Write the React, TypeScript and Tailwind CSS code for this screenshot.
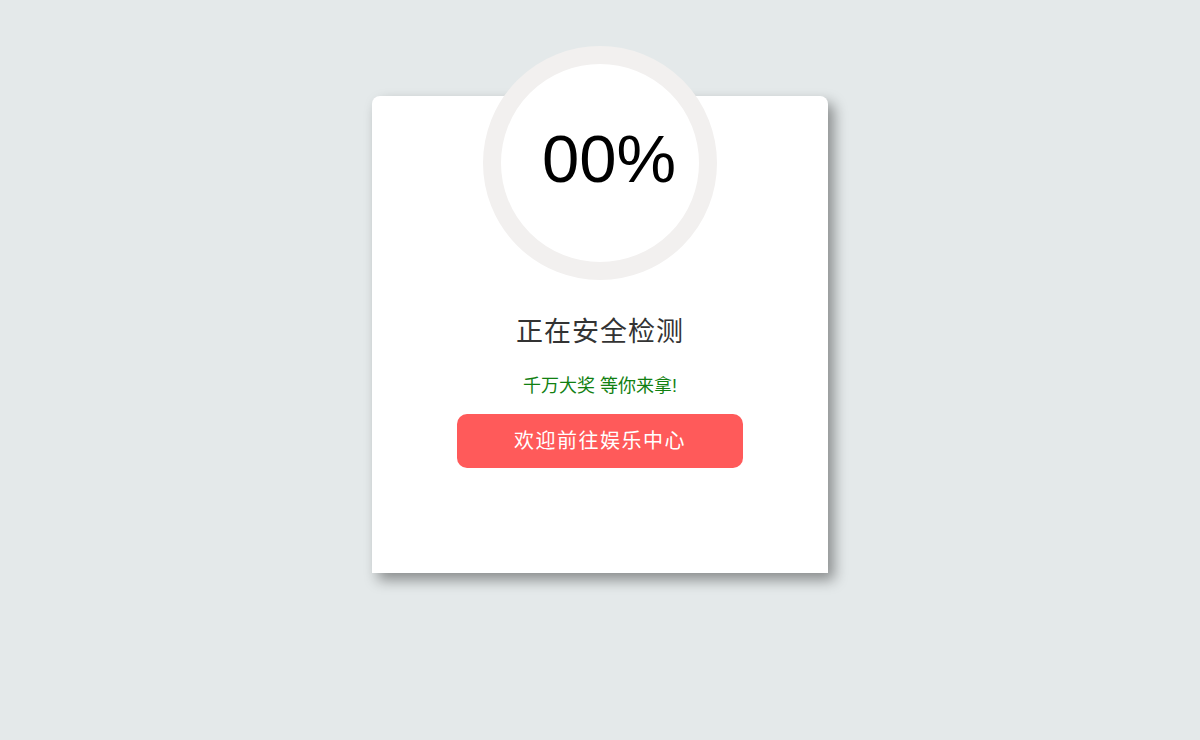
export default function App() {
  return (
    <div
      className="min-h-[740px] w-full bg-[#e4e9ea] flex justify-center"
      style={{ fontFamily: '"Liberation Sans", "Noto Sans CJK SC", sans-serif' }}
    >
      <div className="mt-[96px] w-[456px] h-[477px] bg-white rounded-t-[8px] shadow-[6px_7px_14px_rgba(0,0,0,0.4)] flex flex-col items-center">
        {/* progress ring */}
        <div className="-mt-[50px] w-[234px] h-[234px] rounded-full border-[18px] border-[#f2f0ef] bg-white flex items-center justify-center">
          <span className="text-[67px] leading-none text-black pl-[18px] -mt-[10px]">00%</span>
        </div>

        <h1 className="mt-[35px] text-[27px] leading-[34px] text-[#333] tracking-[1px]">正在安全检测</h1>
        <p className="mt-[25px] text-[18px] leading-[24px] text-[#118011]">千万大奖 等你来拿!</p>

        <button className="mt-[16px] w-[286px] h-[54px] rounded-[10px] bg-[#ff5a5a] text-white text-[20px] tracking-[1.5px]">
          欢迎前往娱乐中心
        </button>
      </div>
    </div>
  )
}
